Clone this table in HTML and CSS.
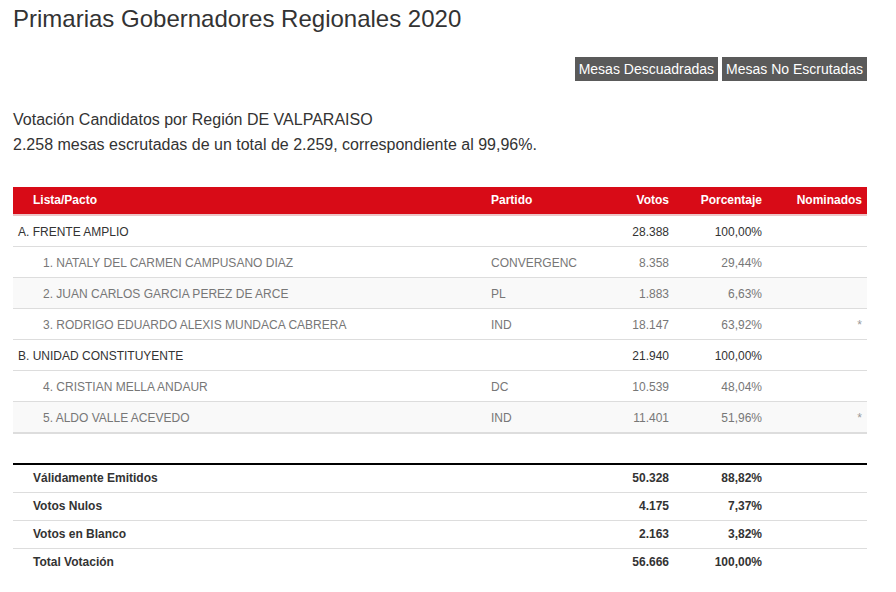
FILE: index.html
```html
<!DOCTYPE html>
<html lang="es">
<head>
<meta charset="utf-8">
<title>Primarias Gobernadores Regionales 2020</title>
<link rel="stylesheet" href="styles.css">
</head>
<body>
<div class="page">
  <h1 class="title">Primarias Gobernadores Regionales 2020</h1>
  <div class="actions">
    <a class="btn">Mesas Descuadradas</a>
    <a class="btn">Mesas No Escrutadas</a>
  </div>
  <div class="intro">
    <p>Votación Candidatos por Región DE VALPARAISO</p>
    <p>2.258 mesas escrutadas de un total de 2.259, correspondiente al 99,96%.</p>
  </div>

  <table class="results">
    <colgroup>
      <col class="c-name"><col class="c-party"><col class="c-votes"><col class="c-pct"><col class="c-nom">
    </colgroup>
    <thead>
      <tr>
        <th class="first">Lista/Pacto</th>
        <th>Partido</th>
        <th class="num">Votos</th>
        <th class="num">Porcentaje</th>
        <th class="num">Nominados</th>
      </tr>
    </thead>
    <tbody>
      <tr class="pact">
        <td class="first">A. FRENTE AMPLIO</td><td></td><td class="num">28.388</td><td class="num">100,00%</td><td class="num"></td>
      </tr>
      <tr class="cand">
        <td class="first">1. NATALY DEL CARMEN CAMPUSANO DIAZ</td><td>CONVERGENC</td><td class="num">8.358</td><td class="num">29,44%</td><td class="num"></td>
      </tr>
      <tr class="cand alt">
        <td class="first">2. JUAN CARLOS GARCIA PEREZ DE ARCE</td><td>PL</td><td class="num">1.883</td><td class="num">6,63%</td><td class="num"></td>
      </tr>
      <tr class="cand">
        <td class="first">3. RODRIGO EDUARDO ALEXIS MUNDACA CABRERA</td><td>IND</td><td class="num">18.147</td><td class="num">63,92%</td><td class="num star">*</td>
      </tr>
      <tr class="pact">
        <td class="first">B. UNIDAD CONSTITUYENTE</td><td></td><td class="num">21.940</td><td class="num">100,00%</td><td class="num"></td>
      </tr>
      <tr class="cand">
        <td class="first">4. CRISTIAN MELLA ANDAUR</td><td>DC</td><td class="num">10.539</td><td class="num">48,04%</td><td class="num"></td>
      </tr>
      <tr class="cand alt last">
        <td class="first">5. ALDO VALLE ACEVEDO</td><td>IND</td><td class="num">11.401</td><td class="num">51,96%</td><td class="num star">*</td>
      </tr>
    </tbody>
  </table>

  <table class="summary">
    <colgroup>
      <col class="c-name"><col class="c-party"><col class="c-votes"><col class="c-pct"><col class="c-nom">
    </colgroup>
    <tbody>
      <tr><td class="first">Válidamente Emitidos</td><td></td><td class="num">50.328</td><td class="num">88,82%</td><td></td></tr>
      <tr><td class="first">Votos Nulos</td><td></td><td class="num">4.175</td><td class="num">7,37%</td><td></td></tr>
      <tr><td class="first">Votos en Blanco</td><td></td><td class="num">2.163</td><td class="num">3,82%</td><td></td></tr>
      <tr><td class="first">Total Votación</td><td></td><td class="num">56.666</td><td class="num">100,00%</td><td></td></tr>
    </tbody>
  </table>
</div>
</body>
</html>
```

FILE: styles.css
```css
* { box-sizing: border-box; }

html, body {
  margin: 0;
  padding: 0;
  background: #fff;
}

body {
  font-family: "Liberation Sans", Arial, sans-serif;
  color: #333;
  font-size: 12px;
}

.page {
  width: 867px;
  padding: 0 0 0 13px;
}

.title {
  margin: 5px 0 0;
  font-size: 24px;
  line-height: 28px;
  font-weight: normal;
  color: #333;
}

.actions {
  display: flex;
  justify-content: flex-end;
  gap: 4px;
  margin-top: 24px;
}

.btn {
  display: block;
  background: #5a5a5a;
  color: #fff;
  font-size: 14px;
  line-height: 24px;
  height: 24px;
  padding: 0 4px;
}

.intro {
  margin-top: 26px;
}

.intro p {
  margin: 0;
  font-size: 16px;
  line-height: 25px;
  color: #333;
}

table {
  width: 854px;
  border-collapse: collapse;
  table-layout: fixed;
}

.c-name { width: 473px; }
.c-party { width: 114px; }
.c-votes { width: 74px; }
.c-pct { width: 93px; }
.c-nom { width: 100px; }

.results {
  margin-top: 30px;
}

.results th {
  background: #d80b17;
  color: #fff;
  font-weight: bold;
  text-align: left;
  font-size: 12px;
  line-height: 17px;
  padding: 5px 5px;
  border-bottom: 2px solid #ecc5c7;
}

.results th.first { padding-left: 20px; }

.results td {
  font-size: 12px;
  line-height: 16px;
  padding: 8px 5px 6px;
  border-bottom: 1px solid #ddd;
  white-space: nowrap;
}

.num { text-align: right !important; }

.pact td { color: #333; }
.cand td { color: #777; }
.cand td.first { padding-left: 30px; }
.alt td { background: #f9f9f9; }
.last td { border-bottom: 2px solid #ddd; }

.star { color: #999 !important; font-size: 11px; }

.summary {
  margin-top: 29px;
  border-top: 2px solid #000;
}

.summary td {
  font-size: 12px;
  font-weight: bold;
  color: #333;
  line-height: 17px;
  padding: 5px 5px;
  border-bottom: 1px solid #ddd;
}

.summary td.first { padding-left: 20px; }
.summary tr:last-child td { border-bottom: none; }
```
